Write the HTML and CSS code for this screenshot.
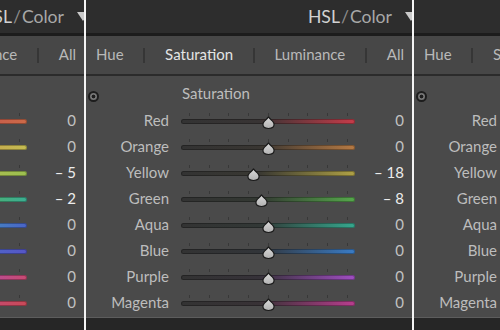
FILE: index.html
```html
<!DOCTYPE html>
<html>
<head>
<meta charset="utf-8">
<link rel="stylesheet" href="styles.css">
</head>
<body>
<svg class="defs" width="0" height="0" aria-hidden="true">
  <defs>
    <linearGradient id="tg" x1="0" y1="0" x2="0" y2="1">
      <stop offset="0" stop-color="#dadada"/>
      <stop offset="1" stop-color="#b2b2b2"/>
    </linearGradient>
    <path id="drop" d="M6.5 0.9 C7.7 2.6 9.5 4.1 10.9 5.6 C12.5 7.3 12.4 10 10.9 11.3 C9.6 12.4 8 12.5 6.5 12.5 C5 12.5 3.4 12.4 2.1 11.3 C0.6 10 0.5 7.3 2.1 5.6 C3.5 4.1 5.3 2.6 6.5 0.9 Z" fill="url(#tg)" stroke="#1b1b1b" stroke-width="1.2" stroke-linejoin="round"/>
  </defs>
</svg>
<div class="strip">

  <section class="panel hue">
    <header class="head"><span class="title"><span class="hsl">HSL</span><span class="slash">/</span><span class="clr">Color</span></span><span class="tri"></span></header>
    <nav class="tabs"><span class="tab on">Hue</span><span class="sep"></span><span class="tab">Saturation</span><span class="sep"></span><span class="tab">Luminance</span><span class="sep"></span><span class="tab">All</span></nav>
    <div class="body">
      <div class="sechead"><span class="target"></span><span class="sectitle">Hue</span></div>
      <div class="rows">
        <div class="row"><span class="lbl">Red</span><div class="slider"><span class="ticks"></span><span class="track c-red"></span><svg class="thumb" viewBox="0 0 13 13" style="left:50%"><use href="#drop"/></svg></div><span class="val">0</span></div>
        <div class="row"><span class="lbl">Orange</span><div class="slider"><span class="ticks"></span><span class="track c-orange"></span><svg class="thumb" viewBox="0 0 13 13" style="left:50%"><use href="#drop"/></svg></div><span class="val">0</span></div>
        <div class="row"><span class="lbl">Yellow</span><div class="slider"><span class="ticks"></span><span class="track c-yellow"></span><svg class="thumb" viewBox="0 0 13 13" style="left:47.5%"><use href="#drop"/></svg></div><span class="val nz">– 5</span></div>
        <div class="row"><span class="lbl">Green</span><div class="slider"><span class="ticks"></span><span class="track c-green"></span><svg class="thumb" viewBox="0 0 13 13" style="left:49%"><use href="#drop"/></svg></div><span class="val nz">– 2</span></div>
        <div class="row"><span class="lbl">Aqua</span><div class="slider"><span class="ticks"></span><span class="track c-aqua"></span><svg class="thumb" viewBox="0 0 13 13" style="left:50%"><use href="#drop"/></svg></div><span class="val">0</span></div>
        <div class="row"><span class="lbl">Blue</span><div class="slider"><span class="ticks"></span><span class="track c-blue"></span><svg class="thumb" viewBox="0 0 13 13" style="left:50%"><use href="#drop"/></svg></div><span class="val">0</span></div>
        <div class="row"><span class="lbl">Purple</span><div class="slider"><span class="ticks"></span><span class="track c-purple"></span><svg class="thumb" viewBox="0 0 13 13" style="left:50%"><use href="#drop"/></svg></div><span class="val">0</span></div>
        <div class="row"><span class="lbl">Magenta</span><div class="slider"><span class="ticks"></span><span class="track c-magenta"></span><svg class="thumb" viewBox="0 0 13 13" style="left:50%"><use href="#drop"/></svg></div><span class="val">0</span></div>
      </div>
    </div>
  </section>

  <section class="panel sat">
    <header class="head"><span class="title"><span class="hsl">HSL</span><span class="slash">/</span><span class="clr">Color</span></span><span class="tri"></span></header>
    <nav class="tabs"><span class="tab">Hue</span><span class="sep"></span><span class="tab on">Saturation</span><span class="sep"></span><span class="tab">Luminance</span><span class="sep"></span><span class="tab">All</span></nav>
    <div class="body">
      <div class="sechead"><span class="target"></span><span class="sectitle">Saturation</span></div>
      <div class="rows">
        <div class="row"><span class="lbl">Red</span><div class="slider"><span class="ticks"></span><span class="track c-red"></span><svg class="thumb" viewBox="0 0 13 13" style="left:50%"><use href="#drop"/></svg></div><span class="val">0</span></div>
        <div class="row"><span class="lbl">Orange</span><div class="slider"><span class="ticks"></span><span class="track c-orange"></span><svg class="thumb" viewBox="0 0 13 13" style="left:50%"><use href="#drop"/></svg></div><span class="val">0</span></div>
        <div class="row"><span class="lbl">Yellow</span><div class="slider"><span class="ticks"></span><span class="track c-yellow"></span><svg class="thumb" viewBox="0 0 13 13" style="left:41.5%"><use href="#drop"/></svg></div><span class="val nz">– 18</span></div>
        <div class="row"><span class="lbl">Green</span><div class="slider"><span class="ticks"></span><span class="track c-green"></span><svg class="thumb" viewBox="0 0 13 13" style="left:46%"><use href="#drop"/></svg></div><span class="val nz">– 8</span></div>
        <div class="row"><span class="lbl">Aqua</span><div class="slider"><span class="ticks"></span><span class="track c-aqua"></span><svg class="thumb" viewBox="0 0 13 13" style="left:50%"><use href="#drop"/></svg></div><span class="val">0</span></div>
        <div class="row"><span class="lbl">Blue</span><div class="slider"><span class="ticks"></span><span class="track c-blue"></span><svg class="thumb" viewBox="0 0 13 13" style="left:50%"><use href="#drop"/></svg></div><span class="val">0</span></div>
        <div class="row"><span class="lbl">Purple</span><div class="slider"><span class="ticks"></span><span class="track c-purple"></span><svg class="thumb" viewBox="0 0 13 13" style="left:50%"><use href="#drop"/></svg></div><span class="val">0</span></div>
        <div class="row"><span class="lbl">Magenta</span><div class="slider"><span class="ticks"></span><span class="track c-magenta"></span><svg class="thumb" viewBox="0 0 13 13" style="left:50%"><use href="#drop"/></svg></div><span class="val">0</span></div>
      </div>
    </div>
  </section>

  <section class="panel lum">
    <header class="head"><span class="title"><span class="hsl">HSL</span><span class="slash">/</span><span class="clr">Color</span></span><span class="tri"></span></header>
    <nav class="tabs"><span class="tab">Hue</span><span class="sep"></span><span class="tab">Saturation</span><span class="sep"></span><span class="tab on">Luminance</span><span class="sep"></span><span class="tab">All</span></nav>
    <div class="body">
      <div class="sechead"><span class="target"></span><span class="sectitle">Luminance</span></div>
      <div class="rows">
        <div class="row"><span class="lbl">Red</span><div class="slider"><span class="ticks"></span><span class="track c-red"></span><svg class="thumb" viewBox="0 0 13 13" style="left:50%"><use href="#drop"/></svg></div><span class="val">0</span></div>
        <div class="row"><span class="lbl">Orange</span><div class="slider"><span class="ticks"></span><span class="track c-orange"></span><svg class="thumb" viewBox="0 0 13 13" style="left:50%"><use href="#drop"/></svg></div><span class="val">0</span></div>
        <div class="row"><span class="lbl">Yellow</span><div class="slider"><span class="ticks"></span><span class="track c-yellow"></span><svg class="thumb" viewBox="0 0 13 13" style="left:50%"><use href="#drop"/></svg></div><span class="val">0</span></div>
        <div class="row"><span class="lbl">Green</span><div class="slider"><span class="ticks"></span><span class="track c-green"></span><svg class="thumb" viewBox="0 0 13 13" style="left:50%"><use href="#drop"/></svg></div><span class="val">0</span></div>
        <div class="row"><span class="lbl">Aqua</span><div class="slider"><span class="ticks"></span><span class="track c-aqua"></span><svg class="thumb" viewBox="0 0 13 13" style="left:50%"><use href="#drop"/></svg></div><span class="val">0</span></div>
        <div class="row"><span class="lbl">Blue</span><div class="slider"><span class="ticks"></span><span class="track c-blue"></span><svg class="thumb" viewBox="0 0 13 13" style="left:50%"><use href="#drop"/></svg></div><span class="val">0</span></div>
        <div class="row"><span class="lbl">Purple</span><div class="slider"><span class="ticks"></span><span class="track c-purple"></span><svg class="thumb" viewBox="0 0 13 13" style="left:50%"><use href="#drop"/></svg></div><span class="val">0</span></div>
        <div class="row"><span class="lbl">Magenta</span><div class="slider"><span class="ticks"></span><span class="track c-magenta"></span><svg class="thumb" viewBox="0 0 13 13" style="left:50%"><use href="#drop"/></svg></div><span class="val">0</span></div>
      </div>
    </div>
  </section>

</div>
</body>
</html>
```

FILE: styles.css
```css
html, body {
  margin: 0;
  padding: 0;
  width: 500px;
  height: 330px;
  overflow: hidden;
  background: #ffffff;
  font-family: "Lato", "Open Sans", sans-serif;
}

.defs {
  position: absolute;
  width: 0;
  height: 0;
}

.strip {
  display: flex;
  gap: 2px;
  margin-left: -242px;
  width: max-content;
  height: 330px;
  background: #f4f4f4;
}

.panel {
  width: 326px;
  height: 330px;
  display: flex;
  flex-direction: column;
  background: #262626;
  overflow: hidden;
}

/* header */
.head {
  height: 32px;
  flex: none;
  background: #2d2d2d;
  border-bottom: 3px solid #1c1c1c;
  display: flex;
  align-items: center;
  justify-content: flex-end;
  padding-bottom: 1px;
  box-sizing: content-box;
}
.title {
  font-size: 17.6px;
  color: #a9a9a9;
}
.hsl { color: #d2d2d2; }
.slash { color: #8c8c8c; margin: 0 1px; }
.clr { color: #a8a8a8; }
.tri {
  width: 0;
  height: 0;
  border-left: 6px solid transparent;
  border-right: 6px solid transparent;
  border-top: 9px solid #c9c9c9;
  margin-left: 13px;
  margin-right: -5px;
  margin-top: 1px;
}

/* tabs */
.tabs {
  height: 40px;
  flex: none;
  background: #474747;
  border-bottom: 2px solid #2b2b2b;
  display: flex;
  align-items: center;
  justify-content: space-between;
  padding: 0 8px 3px 10px;
  box-sizing: border-box;
  font-size: 15px;
  color: #b9b9b9;
}
.tab.on { color: #e4e4e4; }
.sep {
  width: 2px;
  height: 15px;
  background: #363636;
  margin-top: 3px;
}

/* body */
.body {
  flex: none;
  background: #4a4a4a;
  padding-top: 8px;
  padding-bottom: 2px;
  border-bottom: 1px solid #5d5d5d;
}
.sechead {
  display: flex;
  align-items: flex-start;
  height: 18px;
}
.target {
  width: 11px;
  height: 11px;
  box-sizing: border-box;
  border-radius: 50%;
  border: 2px solid #1d1d1d;
  background: radial-gradient(circle, #1d1d1d 0 1.6px, #767676 2.2px);
  margin-left: 2px;
  margin-top: 7px;
  flex: none;
}
.sectitle {
  margin-left: 83px;
  font-size: 15px;
  color: #bdbdbd;
}

.rows {
  margin-top: 5px;
}
.row {
  display: grid;
  grid-template-columns: 83px 174px 1fr;
  column-gap: 12px;
  height: 26px;
  align-items: center;
  padding-right: 8px;
  font-size: 15px;
}
.lbl {
  text-align: right;
  color: #bdbdbd;
}
.val {
  text-align: right;
  color: #c2c2c2;
  font-size: 15px;
}
.val.nz { color: #ececec; }

.slider {
  position: relative;
  height: 26px;
  display: flex;
  align-items: center;
}
.ticks {
  position: absolute;
  left: 8px;
  width: 160px;
  top: 6px;
  height: 3px;
  background: repeating-linear-gradient(to right, #383838 0 1px, transparent 1px 19.75px);
}
.track {
  width: 100%;
  height: 5px;
  margin-top: 3px;
  border-radius: 3px;
  box-shadow: inset 0 0 0 1px rgba(0, 0, 0, 0.28);
}
.thumb {
  position: absolute;
  top: 8.5px;
  width: 13px;
  height: 13px;
  margin-left: -6.5px;
  overflow: visible;
}

/* saturation tracks */
.sat .c-red     { background: linear-gradient(to right, #333 0%, #383434 45%, #c63c4a 100%); }
.sat .c-orange  { background: linear-gradient(to right, #333 0%, #393632 45%, #b67a44 100%); }
.sat .c-yellow  { background: linear-gradient(to right, #333 0%, #393832 45%, #b0a246 100%); }
.sat .c-green   { background: linear-gradient(to right, #333 0%, #333832 45%, #56a84c 100%); }
.sat .c-aqua    { background: linear-gradient(to right, #333 0%, #323836 45%, #36a88e 100%); }
.sat .c-blue    { background: linear-gradient(to right, #333 0%, #323539 45%, #3a7cc6 100%); }
.sat .c-purple  { background: linear-gradient(to right, #333 0%, #363239 45%, #a04ec2 100%); }
.sat .c-magenta { background: linear-gradient(to right, #333 0%, #383236 45%, #b83e8e 100%); }

/* hue tracks */
.hue .c-red     { background: linear-gradient(to right, #b0407a, #c04a50 50%, #cc6a48 100%); }
.hue .c-orange  { background: linear-gradient(to right, #c05a40, #c8904a 50%, #c4bc52 100%); }
.hue .c-yellow  { background: linear-gradient(to right, #c89a48, #bcb850 50%, #9cc050 100%); }
.hue .c-green   { background: linear-gradient(to right, #b0b850, #60b050 50%, #3cae92 100%); }
.hue .c-aqua    { background: linear-gradient(to right, #48b070, #40aeb0 50%, #4a64c8 100%); }
.hue .c-blue    { background: linear-gradient(to right, #40a8b8, #4478c8 50%, #5656c6 100%); }
.hue .c-purple  { background: linear-gradient(to right, #6050c8, #a050c0 50%, #c84a72 100%); }
.hue .c-magenta { background: linear-gradient(to right, #9050c0, #c04a90 50%, #c84a58 100%); }

/* luminance tracks */
.lum .c-red     { background: linear-gradient(to right, #3a1f22, #c65060); }
.lum .c-orange  { background: linear-gradient(to right, #3a2c1f, #d09a60); }
.lum .c-yellow  { background: linear-gradient(to right, #3a381f, #d0c870); }
.lum .c-green   { background: linear-gradient(to right, #223a1f, #80d070); }
.lum .c-aqua    { background: linear-gradient(to right, #1f3a34, #70d0b8); }
.lum .c-blue    { background: linear-gradient(to right, #1f2a3a, #70a0d8); }
.lum .c-purple  { background: linear-gradient(to right, #2e1f3a, #b880d8); }
.lum .c-magenta { background: linear-gradient(to right, #3a1f30, #d070b0); }
```
